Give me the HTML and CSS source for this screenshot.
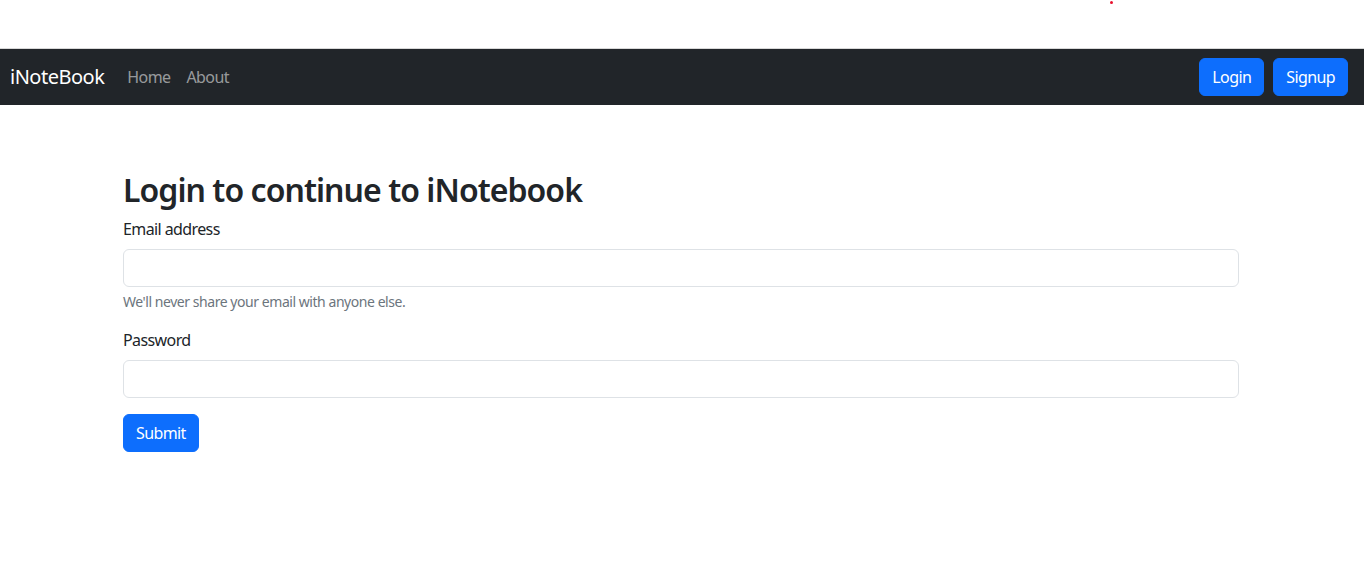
FILE: index.html
```html
<!DOCTYPE html>
<html lang="en">
<head>
<meta charset="utf-8">
<title>iNotebook</title>
<link rel="stylesheet" href="styles.css">
</head>
<body>
<div class="topbar"><span class="dot"></span></div>
<nav class="navbar">
  <div class="nav-left">
    <a class="brand" href="#">iNoteBook</a>
    <a class="nav-link" href="#">Home</a>
    <a class="nav-link" href="#">About</a>
  </div>
  <div class="nav-right">
    <a class="btn" href="#">Login</a>
    <a class="btn" href="#">Signup</a>
  </div>
</nav>
<main class="container">
  <h2 class="title">Login to continue to iNotebook</h2>
  <form class="form">
    <div class="field">
      <label class="label" for="email">Email address</label>
      <input class="input" type="email" id="email">
      <div class="help">We'll never share your email with anyone else.</div>
    </div>
    <div class="field">
      <label class="label" for="password">Password</label>
      <input class="input" type="password" id="password">
    </div>
    <button class="btn submit" type="submit">Submit</button>
  </form>
</main>
</body>
</html>
```
FILE: styles.css
```css
* { box-sizing: border-box; }
html, body { margin: 0; padding: 0; }
body {
  font-family: "Noto Sans", "Open Sans", "Liberation Sans", sans-serif;
  font-size: 16px;
  line-height: 1.5;
  letter-spacing: -0.6px;
  color: #212529;
  background: #fff;
}
.topbar {
  position: relative;
  height: 49px;
  border-bottom: 1px solid #d8d8d8;
}
.dot {
  position: absolute;
  left: 1110px;
  top: 1px;
  width: 3px;
  height: 3px;
  border-radius: 50%;
  background: #e8112d;
}
.navbar {
  background: #212529;
  height: 56px;
  padding: 0 16px 0 10px;
  display: flex;
  align-items: center;
  justify-content: space-between;
}
.nav-left { display: flex; align-items: center; }
.brand {
  color: #fff;
  text-decoration: none;
  font-size: 20px;
  letter-spacing: -0.5px;
  margin-right: 15px;
  line-height: 30px;
}
.nav-link {
  color: rgba(255,255,255,.55);
  text-decoration: none;
  padding: 8px 8px;
}
.nav-right { display: flex; gap: 9px; }
.btn {
  display: inline-block;
  background: #0d6efd;
  color: #fff;
  border: 1px solid #0d6efd;
  border-radius: 6px;
  padding: 6px 12px;
  font-family: inherit;
  font-size: 16px;
  letter-spacing: -0.6px;
  line-height: 24px;
  text-decoration: none;
  cursor: pointer;
}
.container {
  width: 1116px;
  margin: 0 auto;
  padding-top: 66px;
  position: relative;
  left: -1px;
}
.title {
  font-size: 32px;
  font-weight: 600;
  letter-spacing: -0.95px;
  line-height: 1.2;
  margin: 0 0 8px;
}
.field { margin-bottom: 16px; }
.label { display: block; margin-bottom: 8px; }
.input {
  display: block;
  width: 100%;
  height: 38px;
  border: 1px solid #dee2e6;
  border-radius: 6px;
  padding: 6px 12px;
  font: inherit;
}
.help {
  margin-top: 4px;
  font-size: 14px;
  letter-spacing: -0.45px;
  line-height: 21px;
  color: #6c757d;
}
.submit { height: 38px; }
```
